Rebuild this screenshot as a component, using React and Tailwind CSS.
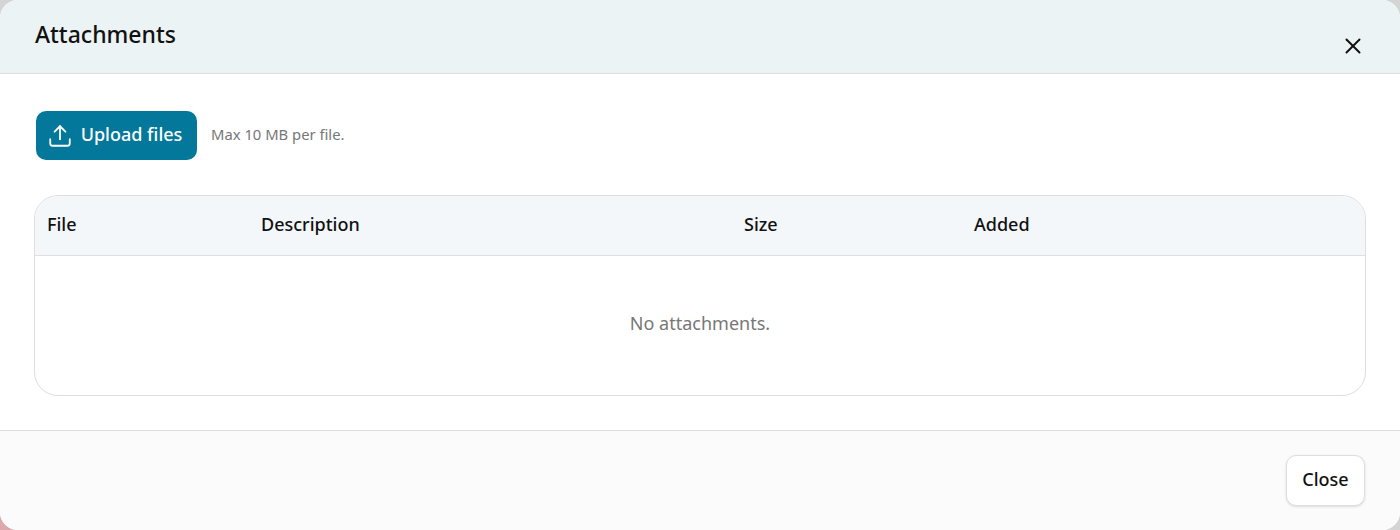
import React from 'react';
import { Upload, X } from 'lucide-react';

export default function App() {
  const cols = [
    { label: 'File', w: 'w-[214px]' },
    { label: 'Description', w: 'w-[483px]' },
    { label: 'Size', w: 'w-[230px]' },
    { label: 'Added', w: 'flex-1' },
  ];

  return (
    <div className="h-[530px] w-[1400px] overflow-hidden bg-[linear-gradient(to_top_right,#dba8ae_0%,#dba8ae_2%,#d4d4d4_3%,#d4d4d4_100%)] font-['Noto_Sans',sans-serif]">
      <div className="flex h-full flex-col overflow-hidden rounded-[18px] bg-white">
        <div className="flex h-[74px] justify-between border-b border-[#dedede] bg-[#ecf3f5] pl-[35px] pr-[34px]">
          <h2 className="pt-[16px] text-[23px] leading-[36px] font-medium text-[#111]">Attachments</h2>
          <X className="mt-[33px] h-[26px] w-[26px] text-[#111]" strokeWidth={1.8} />
        </div>

        <div className="flex-1 px-[34px] pt-[37px]">
          <div className="flex items-center gap-[14px] pl-[2px]">
            <button className="flex h-[49px] w-[161px] items-center justify-center gap-[8px] rounded-[10px] bg-[#03789a] pr-[4px] text-[18px] font-medium text-white">
              <Upload className="h-[26px] w-[26px]" strokeWidth={1.7} />
              <span className="pb-[2px]">Upload files</span>
            </button>
            <span className="pb-[2px] text-[14.8px] text-[#777]">Max 10 MB per file.</span>
          </div>

          <div className="mt-[35px] h-[201px] overflow-hidden rounded-[24px] border border-[#dedede]">
            <div className="flex h-[60px] items-center border-b border-[#dedede] bg-[#f3f7fa] pb-[2px] pl-[12px] text-[18px] font-medium text-[#111]">
              {cols.map((c) => (
                <div key={c.label} className={c.w}>{c.label}</div>
              ))}
            </div>
            <div className="pt-[54px] text-center text-[18px] text-[#777]">No attachments.</div>
          </div>
        </div>

        <div className="flex h-[100px] items-start justify-end border-t border-[#dedede] bg-[#fbfbfb] pr-[35px] pt-[24px]">
          <button className="h-[51px] w-[79px] rounded-[10px] border border-[#dedede] bg-white pb-[2px] text-[18px] font-medium text-[#111] shadow-sm">
            Close
          </button>
        </div>
      </div>
    </div>
  );
}
